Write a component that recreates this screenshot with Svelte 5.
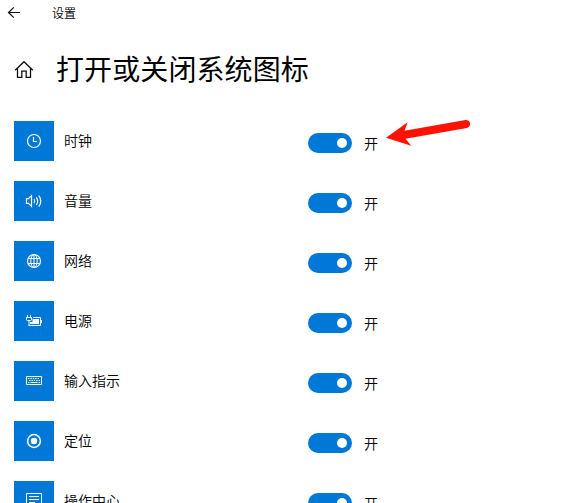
<script>
  let items = $state([
    { icon: 'clock', label: '时钟', on: true },
    { icon: 'volume', label: '音量', on: true },
    { icon: 'network', label: '网络', on: true },
    { icon: 'power', label: '电源', on: true },
    { icon: 'keyboard', label: '输入指示', on: true },
    { icon: 'location', label: '定位', on: true },
    { icon: 'action', label: '操作中心', on: true }
  ]);
</script>

<div class="window">
  <header class="titlebar">
    <svg class="back" width="14" height="12" viewBox="0 0 14 12">
      <path d="M1.5 5.5H13M6.8.4 1.5 5.5l5.3 5.1" />
    </svg>
    <span class="app-name">设置</span>
  </header>

  <div class="heading">
    <svg class="home" width="20" height="20" viewBox="0 0 20 20">
      <path d="M1.2 11.2 10 2.7l8.8 8.5M3.5 9.4v9h4.3v-6.2h4.4v6.2h4.3v-9" />
    </svg>
    <h1>打开或关闭系统图标</h1>
  </div>

  <div class="list">
    {#each items as item}
      <div class="row">
        <div class="tile">
          <svg width="20" height="20" viewBox="0 0 20 20">
            {#if item.icon === 'clock'}
              <circle cx="10" cy="10" r="6.5" stroke-width="1.2" />
              <path d="M9.5 6v4.5H13" stroke-width="1.2" />
            {:else if item.icon === 'volume'}
              <path stroke-width="1.2" d="M2.5 7.7h2l3-3v10.6l-3-3h-2zM10 8q1.5 2 0 4.2M12.3 6.3q2.8 3.7 0 7.6M14.8 4.5q4 5.5 0 11.2" />
            {:else if item.icon === 'network'}
              <circle cx="10" cy="10" r="6.5" stroke-width="1.2" />
              <ellipse cx="10" cy="10" rx="3.2" ry="6.5" />
              <path d="M4 7.5h12M4 12.5h12M10 3.5v13" />
            {:else if item.icon === 'power'}
              <path d="M3.5 4v2.5M6.5 4v2.5M2 6.5h6M2.5 6.5v2q0 1 1 1h3q1 0 1-1v-2M5 9.5v5M9 6.5h7.5v8H4.5M17.5 9v3" />
              <path class="solid" d="M8.5 8H15v5H6v-2h2.5z" />
            {:else if item.icon === 'keyboard'}
              <path d="M2.5 5.5h15v8h-15z" />
              <path d="M4 7.5h12" stroke-dasharray="1.4 1" />
              <path d="M5 9.5h11" stroke-dasharray="1.4 1" />
              <path d="M4 11.5h1.5M6.5 11.5h7M14.5 11.5H16" />
            {:else if item.icon === 'location'}
              <circle cx="10" cy="10" r="6.4" stroke-width="1.5" />
              <circle class="solid" cx="10" cy="10" r="3.2" />
            {:else}
              <path d="M2.5 2.5h15v12H10l-3 3v-3H2.5zM5 5.5h10M5 8.5h10M5 11.5h6" />
            {/if}
          </svg>
        </div>
        <span class="label">{item.label}</span>
        <button
          class="toggle"
          class:off={!item.on}
          role="switch"
          aria-checked={item.on}
          aria-label={item.label}
          onclick={() => (item.on = !item.on)}
        ><i></i></button>
        <span class="state">{item.on ? '开' : '关'}</span>
      </div>
    {/each}
  </div>

  <svg class="arrow" width="90" height="30" viewBox="0 0 90 30">
    <path d="M1 19.7 22.7 4.3 19.5 12.7 80.5 2.1Q84 1.7 85 4.8 85.7 8.5 82 9.9L20.5 20.8 26.3 27.7Z" />
  </svg>
</div>

<style>
  :global(body) {
    margin: 0;
    background: #fff;
  }
  .window {
    position: relative;
    box-sizing: border-box;
    width: 571px;
    height: 503px;
    overflow: hidden;
    background: #fff;
    color: #000;
    font-family: "Noto Sans CJK SC", sans-serif;
    font-weight: 350;
  }
  .titlebar {
    display: flex;
    align-items: center;
    height: 26px;
    padding-left: 7px;
  }
  .back,
  .home {
    fill: none;
    stroke: #111;
    stroke-width: 1.2;
  }
  .app-name {
    margin-left: 31px;
    font-size: 12px;
    line-height: 26px;
  }
  .heading {
    display: flex;
    align-items: center;
    height: 84px;
    padding: 0 0 2px 14px;
  }
  .home {
    stroke-width: 1.3;
    margin-top: 2px;
  }
  h1 {
    margin: 0 0 0 22px;
    font-size: 28px;
    font-weight: 400;
    letter-spacing: 0.1px;
    line-height: 40px;
    white-space: nowrap;
  }
  .list {
    display: flex;
    flex-direction: column;
    gap: 20px;
    padding: 9px 0 0 14px;
  }
  .row {
    display: flex;
    height: 40px;
  }
  .tile {
    display: flex;
    align-items: center;
    justify-content: center;
    width: 40px;
    height: 40px;
    background: #0078d7;
  }
  .tile svg {
    fill: none;
    stroke: #fff;
    stroke-width: 1;
  }
  .tile .solid {
    fill: #fff;
    stroke: none;
  }
  .label {
    width: 244px;
    margin-left: 10px;
    font-size: 14px;
    line-height: 38px;
  }
  .toggle {
    display: flex;
    align-items: center;
    justify-content: flex-end;
    width: 44px;
    height: 20px;
    margin: 12px 12px 0 0;
    padding: 0 5px;
    border: 0;
    border-radius: 10px;
    background: #0078d7;
  }
  .toggle.off {
    justify-content: flex-start;
    background: #777;
  }
  .toggle i {
    width: 10px;
    height: 10px;
    border-radius: 50%;
    background: #fff;
  }
  .state {
    font-size: 14px;
    line-height: 44px;
  }
  .arrow {
    position: absolute;
    left: 385px;
    top: 118px;
    fill: #ff1200;
  }
</style>
